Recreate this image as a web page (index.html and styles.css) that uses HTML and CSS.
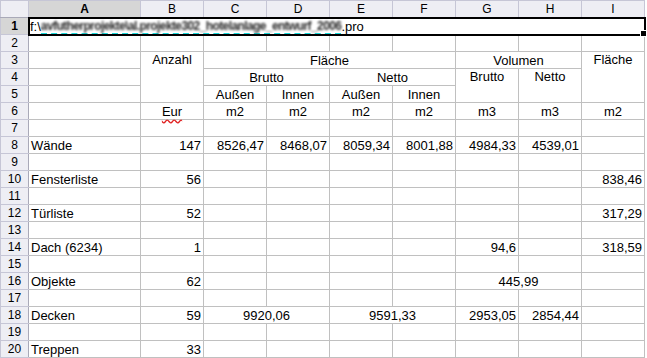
FILE: index.html
```html
<!DOCTYPE html>
<html>
<head>
<meta charset="utf-8">
<link rel="stylesheet" href="styles.css">
</head>
<body>
<table class="sheet">
  <colgroup>
    <col class="c-rh"><col class="c-a"><col class="c-n"><col class="c-n"><col class="c-n"><col class="c-n"><col class="c-n"><col class="c-n"><col class="c-n"><col class="c-n">
  </colgroup>
  <tr class="colhead">
    <th class="corner"></th><th class="sel">A</th><th>B</th><th>C</th><th>D</th><th>E</th><th>F</th><th>G</th><th>H</th><th>I</th>
  </tr>
  <tr>
    <th class="rh sel">1</th>
    <td colspan="9" class="path"><span class="plain">f:\</span><span class="link"><span class="blur">avfutherprojekte\al.projekte302_hotelanlage_entwurf_2006</span></span><span class="plain">.pro</span><span class="handle"></span></td>
  </tr>
  <tr><th class="rh">2</th><td></td><td></td><td></td><td></td><td></td><td></td><td></td><td></td><td></td></tr>
  <tr>
    <th class="rh">3</th><td></td><td rowspan="3" class="c top">Anzahl</td><td colspan="4" class="c">Fläche</td><td colspan="2" class="c">Volumen</td><td rowspan="3" class="c top">Fläche</td>
  </tr>
  <tr>
    <th class="rh">4</th><td></td><td colspan="2" class="c">Brutto</td><td colspan="2" class="c">Netto</td><td rowspan="2" class="c top">Brutto</td><td rowspan="2" class="c top">Netto</td>
  </tr>
  <tr>
    <th class="rh">5</th><td></td><td class="c">Außen</td><td class="c">Innen</td><td class="c">Außen</td><td class="c">Innen</td>
  </tr>
  <tr>
    <th class="rh">6</th><td></td><td class="c"><span class="spell">Eur</span></td><td class="c">m2</td><td class="c">m2</td><td class="c">m2</td><td class="c">m2</td><td class="c">m3</td><td class="c">m3</td><td class="c">m2</td>
  </tr>
  <tr><th class="rh">7</th><td></td><td></td><td></td><td></td><td></td><td></td><td></td><td></td><td></td></tr>
  <tr>
    <th class="rh">8</th><td>Wände</td><td class="r">147</td><td class="r">8526,47</td><td class="r">8468,07</td><td class="r">8059,34</td><td class="r">8001,88</td><td class="r">4984,33</td><td class="r">4539,01</td><td></td>
  </tr>
  <tr><th class="rh">9</th><td></td><td></td><td></td><td></td><td></td><td></td><td></td><td></td><td></td></tr>
  <tr>
    <th class="rh">10</th><td>Fensterliste</td><td class="r">56</td><td></td><td></td><td></td><td></td><td></td><td></td><td class="r">838,46</td>
  </tr>
  <tr><th class="rh">11</th><td></td><td></td><td></td><td></td><td></td><td></td><td></td><td></td><td></td></tr>
  <tr>
    <th class="rh">12</th><td>Türliste</td><td class="r">52</td><td></td><td></td><td></td><td></td><td></td><td></td><td class="r">317,29</td>
  </tr>
  <tr><th class="rh">13</th><td></td><td></td><td></td><td></td><td></td><td></td><td></td><td></td><td></td></tr>
  <tr>
    <th class="rh">14</th><td>Dach (6234)</td><td class="r">1</td><td></td><td></td><td></td><td></td><td class="r">94,6</td><td></td><td class="r">318,59</td>
  </tr>
  <tr><th class="rh">15</th><td></td><td></td><td></td><td></td><td></td><td></td><td></td><td></td><td></td></tr>
  <tr>
    <th class="rh">16</th><td>Objekte</td><td class="r">62</td><td></td><td></td><td></td><td></td><td colspan="2" class="c">445,99</td><td></td>
  </tr>
  <tr><th class="rh">17</th><td></td><td></td><td></td><td></td><td></td><td></td><td></td><td></td><td></td></tr>
  <tr>
    <th class="rh">18</th><td>Decken</td><td class="r">59</td><td colspan="2" class="c">9920,06</td><td colspan="2" class="c">9591,33</td><td class="r">2953,05</td><td class="r">2854,44</td><td></td>
  </tr>
  <tr><th class="rh">19</th><td></td><td></td><td></td><td></td><td></td><td></td><td></td><td></td><td></td></tr>
  <tr>
    <th class="rh">20</th><td>Treppen</td><td class="r">33</td><td></td><td></td><td></td><td></td><td></td><td></td><td></td>
  </tr>
</table>
</body>
</html>
```

FILE: styles.css
```css
html, body {
  margin: 0;
  padding: 0;
  background: #ffffff;
}

body {
  font-family: "Liberation Sans", Arial, sans-serif;
  font-size: 13px;
  color: #000;
}

.sheet {
  border-collapse: collapse;
  table-layout: fixed;
  width: 645px;
}

.c-rh { width: 28px; }
.c-a { width: 112px; }
.c-n { width: 63px; }

.sheet tr {
  height: 17px;
}

.sheet td {
  border: 1px solid #c0c0c0;
  padding: 0 2px;
  height: 16px;
  line-height: 15px;
  vertical-align: bottom;
  white-space: nowrap;
  overflow: visible;
}

.sheet td.c { text-align: center; }
.sheet td.r { text-align: right; }
.sheet td.top { vertical-align: top; }

.colhead th {
  background: #eeeef4;
  border: 1px solid #c6c6d6;
  border-bottom-color: #a9a9b8;
  font-weight: normal;
  font-size: 12px;
  height: 16px;
  line-height: 16px;
  padding: 0;
}

.colhead th.corner {
  background: #eeeef4;
}

.rh {
  background: #eeeef4;
  border: 1px solid #c6c6d6;
  border-right-color: #a9a9b8;
  font-weight: normal;
  font-size: 12px;
  line-height: 15px;
  padding: 0;
  text-align: center;
}

.sel {
  background: #d6d6d6 !important;
  font-weight: bold !important;
}

.path {
  position: relative;
  outline: 2px solid #000;
  outline-offset: -1px;
  padding-left: 1px !important;
}

.link {
  display: inline-block;
  border-bottom: 2px dashed #19d7d9;
  line-height: 13px;
  vertical-align: bottom;
  margin-bottom: -1px;
}

.blur {
  display: inline-block;
  filter: blur(1.3px);
  color: #2a2a2a;
  font-size: 12px;
  font-weight: bold;
  letter-spacing: -0.6px;
}

.handle {
  position: absolute;
  right: -3px;
  bottom: -3px;
  width: 5px;
  height: 5px;
  background: #000;
  border: 1px solid #fff;
}

.spell {
  text-decoration: underline wavy #e02020;
  text-decoration-skip-ink: none;
  text-underline-offset: 3px;
}
```
